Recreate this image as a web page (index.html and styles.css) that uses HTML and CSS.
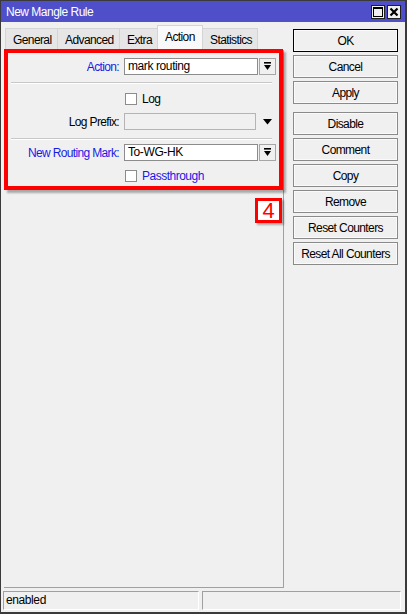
FILE: index.html
```html
<!DOCTYPE html>
<html lang="en">
<head>
    <meta charset="UTF-8">
    <meta name="viewport" content="width=device-width, initial-scale=1.0">
    <title>New Mangle Rule</title>
    <link rel="stylesheet" href="styles.css">
</head>
<body>

    <div class="window">

        <!-- Title Bar -->
        <div class="titlebar">
            <span class="title">New Mangle Rule</span>
            <div class="title-btns">
                <span class="tbtn">
                    <svg width="10" height="10" viewBox="0 0 10 10"><rect x="0.5" y="0.5" width="9" height="9" fill="none" stroke="#000" stroke-width="1"/><rect x="0" y="0" width="10" height="2" fill="#000"/></svg>
                </span>
                <span class="tbtn">
                    <svg width="10" height="10" viewBox="0 0 10 10"><path d="M1.5 1.5 L8.5 8.5 M8.5 1.5 L1.5 8.5" stroke="#000" stroke-width="2.2"/></svg>
                </span>
            </div>
        </div>

        <div class="main">

            <!-- Left: tabs + tab page -->
            <div class="left">
                <div class="tabs">
                    <div class="tab">General</div>
                    <div class="tab">Advanced</div>
                    <div class="tab">Extra</div>
                    <div class="tab active">Action</div>
                    <div class="tab">Statistics</div>
                </div>

                <div class="panel">
                    <div class="highlight">
                        <div class="row">
                            <span class="label blue">Action:</span>
                            <span class="field">mark routing</span>
                            <span class="drop"><svg width="9" height="9" viewBox="0 0 9 9"><rect x="1" y="0" width="7" height="1.6" fill="#000"/><polygon points="1,3 8,3 4.5,8" fill="#000"/></svg></span>
                        </div>
                        <div class="sep"></div>
                        <div class="row check-row log-row">
                            <span class="label"></span>
                            <span class="check"></span>
                            <span class="check-text">Log</span>
                        </div>
                        <div class="row prefix-row">
                            <span class="label">Log Prefix:</span>
                            <span class="field disabled"></span>
                            <span class="arrow"><svg width="9" height="6" viewBox="0 0 9 6"><polygon points="0,0 9,0 4.5,5.5" fill="#000"/></svg></span>
                        </div>
                        <div class="sep sep-low"></div>
                        <div class="row mark-row">
                            <span class="label blue">New Routing Mark:</span>
                            <span class="field">To-WG-HK</span>
                            <span class="drop"><svg width="9" height="9" viewBox="0 0 9 9"><rect x="1" y="0" width="7" height="1.6" fill="#000"/><polygon points="1,3 8,3 4.5,8" fill="#000"/></svg></span>
                        </div>
                        <div class="row check-row pass-row">
                            <span class="label"></span>
                            <span class="check"></span>
                            <span class="check-text blue">Passthrough</span>
                        </div>
                    </div>

                    <div class="badge">4</div>
                </div>
            </div>

            <!-- Right: buttons -->
            <div class="side">
                <div class="btn default">OK</div>
                <div class="btn">Cancel</div>
                <div class="btn">Apply</div>
                <div class="btn spaced">Disable</div>
                <div class="btn">Comment</div>
                <div class="btn">Copy</div>
                <div class="btn">Remove</div>
                <div class="btn">Reset Counters</div>
                <div class="btn">Reset All Counters</div>
            </div>

        </div>

        <!-- Status Bar -->
        <div class="status">
            <div class="cell first-cell">enabled</div>
            <div class="cell"></div>
        </div>

    </div>

</body>
</html>
```

FILE: styles.css
```css
body {
    margin: 0;
    background-color: #ffffff;
    font-family: "Liberation Sans", Arial, sans-serif;
    font-size: 12px;
    color: #000;
}

/* Window Frame */
.window {
    box-sizing: border-box;
    width: 407px;
    height: 614px;
    border: 1px solid #3a3a3a;
    border-right-width: 2px;
    border-bottom-width: 2px;
    background-color: #f0f0f0;
    display: flex;
    flex-direction: column;
}

/* Title Bar */
.titlebar {
    height: 21px;
    background-color: #4f50c9;
    color: #ffffff;
    display: flex;
    align-items: center;
    justify-content: space-between;
    padding: 0 4px 0 5px;
}

.title {
    font-size: 12px;
    letter-spacing: -0.5px;
    padding-top: 1px;
}

.title-btns {
    display: flex;
    gap: 2px;
    padding-top: 1px;
}

.tbtn {
    box-sizing: border-box;
    width: 14px;
    height: 14px;
    background-color: #f0f0f0;
    border: 1px solid #202020;
    display: flex;
    align-items: center;
    justify-content: center;
}

/* Main Area */
.main {
    flex: 1;
    display: flex;
    padding: 0 0 3px 3px;
}

.left {
    width: 280px;
    display: flex;
    flex-direction: column;
}

/* Tabs */
.tabs {
    display: flex;
    align-items: flex-end;
    height: 25px;
    margin-top: 3px;
    padding-left: 1px;
    font-size: 12px;
    letter-spacing: -0.6px;
}

.tab {
    box-sizing: border-box;
    height: 22px;
    padding: 0 7px;
    background-color: #e6e6e6;
    border: 1px solid #d4d4d4;
    border-bottom: none;
    display: flex;
    align-items: center;
    margin-right: -1px;
}

.tab:nth-child(1) { width: 53px; }
.tab:nth-child(2) { width: 63px; }
.tab:nth-child(3) { width: 39px; }
.tab:nth-child(5) { width: 56px; }

.tab.active {
    width: 46px;
    height: 25px;
    background-color: #f9f9f9;
    padding-bottom: 3px;
    position: relative;
    z-index: 1;
}

/* Tab Page */
.panel {
    flex: 1;
    border-right: 1px solid #a0a0a0;
    border-bottom: 1px solid #a0a0a0;
    display: flex;
    flex-direction: column;
}

/* Red annotation frame around the action fields */
.highlight {
    box-sizing: border-box;
    width: 279px;
    height: 141px;
    margin-top: -1px;
    border: 4px solid #ff0000;
    box-shadow: 3px 3px 2px rgba(0, 0, 0, 0.3);
    padding: 5px 3px 0 0;
    position: relative;
    z-index: 2;
}

.row {
    display: flex;
    align-items: center;
    height: 17px;
}

.label {
    width: 111px;
    text-align: right;
    margin-right: 5px;
    flex-shrink: 0;
    letter-spacing: -0.65px;
}

.blue {
    color: #1a1ae6;
}

.field {
    box-sizing: border-box;
    width: 134px;
    height: 17px;
    background-color: #ffffff;
    border: 1px solid #8c8c8c;
    padding: 0 3px;
    line-height: 15px;
    letter-spacing: -0.4px;
}

.field.disabled {
    background-color: #f0f0f0;
    border-color: #b4b4b4;
}

.drop {
    box-sizing: border-box;
    width: 17px;
    height: 17px;
    margin-left: 1px;
    border: 1px solid #a6a6a6;
    background-color: #f0f0f0;
    display: flex;
    align-items: center;
    justify-content: center;
}

.arrow {
    width: 17px;
    margin-left: 3px;
    display: flex;
    justify-content: center;
}

.sep {
    height: 1px;
    background-color: #c8c8c8;
    border-bottom: 1px solid #ffffff;
    margin: 7px 4px 0 3px;
}

.sep-low {
    margin-top: 8px;
}

.check-row {
    height: 12px;
}

.log-row {
    margin-top: 9px;
}

.prefix-row {
    margin-top: 8px;
}

.mark-row {
    margin-top: 4px;
}

.pass-row {
    margin-top: 9px;
}

.check {
    box-sizing: border-box;
    width: 12px;
    height: 12px;
    background-color: #ffffff;
    border: 1px solid #8c8c8c;
    margin-left: 1px;
}

.check-text {
    margin-left: 5px;
    letter-spacing: -0.5px;
}

/* Step Badge */
.badge {
    box-sizing: border-box;
    align-self: flex-end;
    width: 27px;
    height: 25px;
    margin: 8px 1px 0 0;
    border: 3px solid #ff0000;
    background-color: #ffffff;
    color: #ff0000;
    font-size: 22px;
    line-height: 19px;
    text-align: center;
    box-shadow: 2px 2px 2px rgba(0, 0, 0, 0.3);
}

/* Right Button Column */
.side {
    width: 105px;
    margin-left: 9px;
    padding-top: 7px;
    display: flex;
    flex-direction: column;
}

.btn {
    box-sizing: border-box;
    height: 23px;
    margin-bottom: 3px;
    border: 1px solid #8a8a8a;
    box-shadow: inset 0 0 0 1px #fafafa;
    background-color: #f0f0f0;
    display: flex;
    align-items: center;
    justify-content: center;
    letter-spacing: -0.6px;
}

.btn.default {
    border-color: #000000;
}

.btn.spaced {
    margin-top: 5px;
}

/* Status Bar */
.status {
    display: flex;
    height: 19px;
    padding: 0 4px 2px 2px;
    gap: 3px;
}

.cell {
    box-sizing: border-box;
    flex: 1;
    border: 1px solid #ffffff;
    border-top-color: #a0a0a0;
    border-left-color: #a0a0a0;
    padding: 0 2px;
    line-height: 17px;
    letter-spacing: -0.4px;
}

.first-cell {
    flex: none;
    width: 196px;
}
```
